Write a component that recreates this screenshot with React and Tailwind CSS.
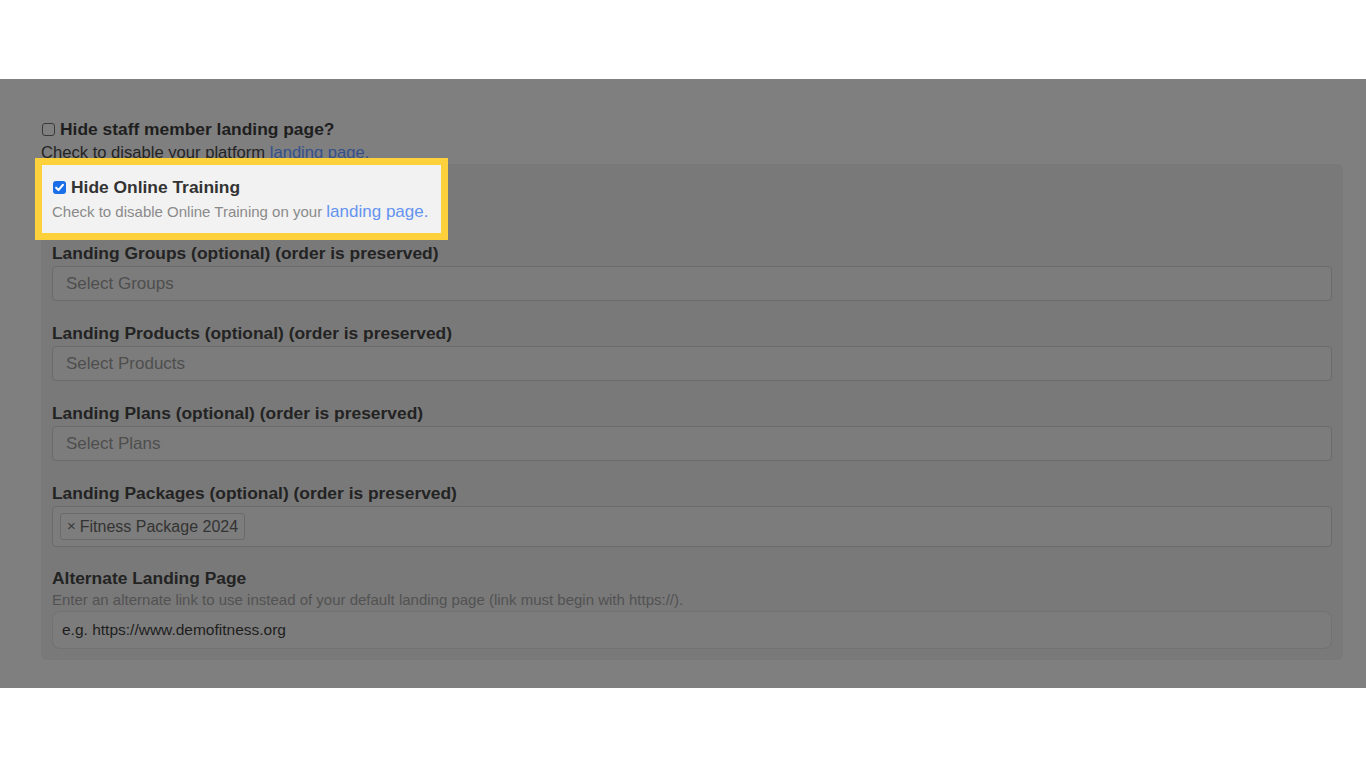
export default function App() {
    const fields = [
        { label: "Landing Groups (optional) (order is preserved)", placeholder: "Select Groups" },
        { label: "Landing Products (optional) (order is preserved)", placeholder: "Select Products" },
        { label: "Landing Plans (optional) (order is preserved)", placeholder: "Select Plans" },
    ]

    return (
        <div className="w-[1366px] h-[768px] bg-white font-['Liberation_Sans',Arial,sans-serif] overflow-hidden">
            <div className="h-[79px] bg-white" />
            <div className="h-[609px] bg-[#7f7f7f] pt-[40px]">
                {/* staff landing page */}
                <div className="pl-[41px]">
                    <div className="flex items-center h-[20px]">
                        <span className="ml-[1px] w-[13px] h-[13px] rounded-[3px] border border-[#3a3a3a] bg-[#7f7f7f]" />
                        <span className="ml-[5px] text-[17.4px] font-bold text-[#1e1e1e] leading-[20px]">Hide staff member landing page?</span>
                    </div>
                    <div className="text-[16.6px] leading-[25px] text-[#232323] mt-[1px]">
                        Check to disable your platform <span className="text-[#34508a]">landing page.</span>
                    </div>
                </div>

                {/* settings panel */}
                <div className="ml-[41px] w-[1302px] h-[496px] -mt-[1px] rounded-md bg-[#797979] pt-[1px] pl-[1px] pr-[11px]">
                    <div className="w-[399px] h-[68px] bg-[#f2f2f2] outline-[7px] outline-solid outline-[#fcd13c] pl-[11px] pt-[13px]">
                        <div className="flex items-center h-[18px]">
                            <span className="w-[13px] h-[13px] rounded-[3px] bg-[#1a6fe8] flex items-center justify-center">
                                <svg viewBox="0 0 12 12" className="w-[11px] h-[11px]" fill="none" stroke="white" strokeWidth="2.2" strokeLinecap="round" strokeLinejoin="round">
                                    <path d="M2.3 6.2 4.9 8.8 9.8 3" />
                                </svg>
                            </span>
                            <span className="ml-[5px] text-[17.4px] font-bold text-[#333] leading-[20px]">Hide Online Training</span>
                        </div>
                        <div className="-ml-[1px] mt-[5px] text-[15px] leading-[22px] text-[#8a8a8a]">
                            Check to disable Online Training on your <span className="text-[17px] text-[#6493f0]">landing page.</span>
                        </div>
                    </div>

                    <div className="pl-[10px]">
                        <div className="pt-[10px]">
                            {fields.map((f, i) => (
                                <div key={f.label} className={i === 0 ? "" : "mt-[22px]"}>
                                    <div className="text-[17.4px] font-bold text-[#232323] leading-[20px]">{f.label}</div>
                                    <div className="mt-[3px] h-[35px] rounded-[4px] border border-[#6b6b6b] bg-[#7c7c7c] pl-[13px] flex items-center text-[17px] text-[#4e4e4e]">
                                        {f.placeholder}
                                    </div>
                                </div>
                            ))}

                            <div className="mt-[22px]">
                                <div className="text-[17.4px] font-bold text-[#232323] leading-[20px]">Landing Packages (optional) (order is preserved)</div>
                                <div className="mt-[3px] h-[41px] rounded-[4px] border border-[#6b6b6b] bg-[#7c7c7c] pl-[7px] flex items-center">
                                    <div className="h-[27px] px-[6px] rounded-[3px] border border-[#6a6a6a] bg-[#7d7d7d] flex items-center text-[16px] text-[#333]">
                                        <span className="text-[15px] mr-[4px] text-[#3a3a3a]">×</span>Fitness Package 2024
                                    </div>
                                </div>
                            </div>

                            <div className="mt-[21px]">
                                <div className="text-[17.4px] font-bold text-[#232323] leading-[20px]">Alternate Landing Page</div>
                                <div className="mt-[2px] text-[15px] text-[#525252] leading-[20px]">
                                    Enter an alternate link to use instead of your default landing page (link must begin with https://).
                                </div>
                                <div className="mt-[1px] h-[38px] rounded-[8px] border border-[#727272] bg-[#7c7c7c] pl-[9px] flex items-center text-[15.5px] text-[#1e1e1e]">
                                    e.g. https://www.demofitness.org
                                </div>
                            </div>
                        </div>
                    </div>
                </div>
            </div>
            <div className="h-[80px] bg-white" />
        </div>
    )
}
